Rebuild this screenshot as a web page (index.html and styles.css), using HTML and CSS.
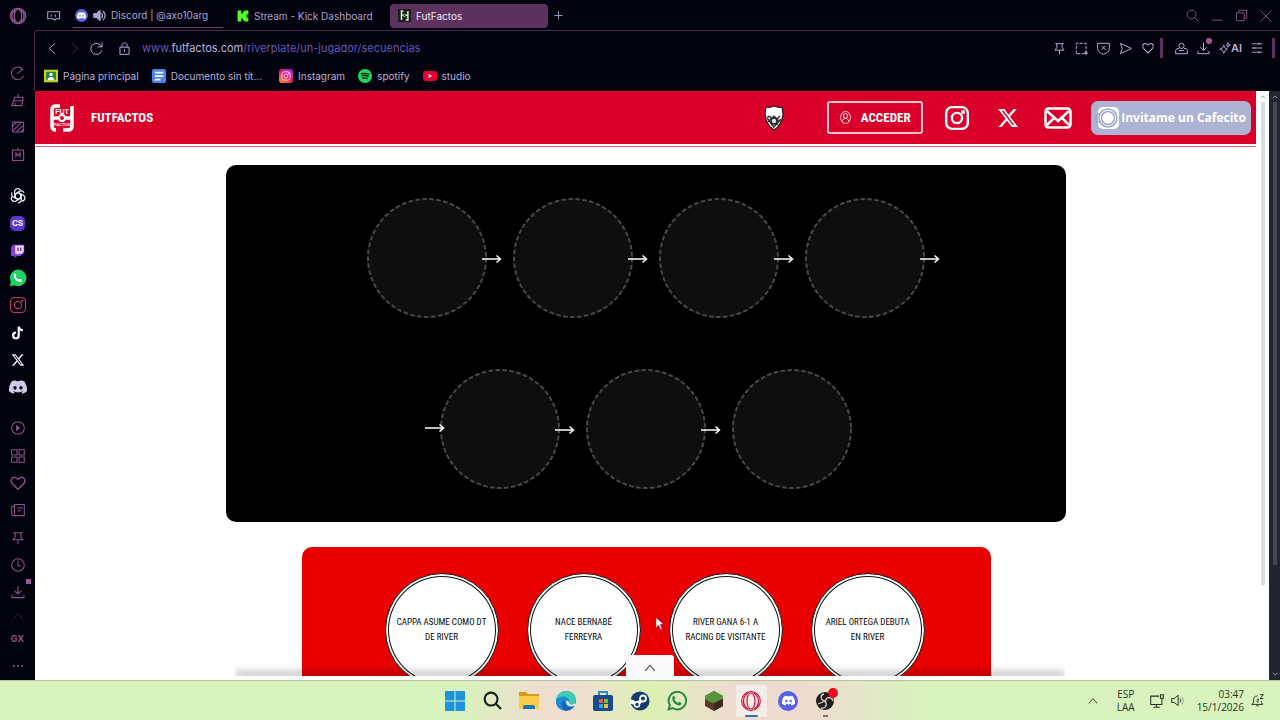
FILE: index.html
```html
<!DOCTYPE html>
<html lang="es">
<head>
<meta charset="utf-8">
<title>FutFactos</title>
<link rel="stylesheet" href="styles.css">
</head>
<body>
<svg class="defs" aria-hidden="true">
  <symbol id="opera" viewBox="0 0 20 20"><circle cx="10" cy="10" r="8.5"/><ellipse cx="10" cy="10" rx="4.2" ry="7.6"/><path d="M7 3.5c-5 3-5 10 0 13M13 3.5c5 3 5 10 0 13"/></symbol>
  <symbol id="discord" viewBox="0 0 24 24"><path stroke="none" fill="currentColor" fill-rule="evenodd" d="M20.3 4.4A19.8 19.8 0 0 0 15.4 3l-.6 1.2a18 18 0 0 0-5.6 0L8.600 3a19.700 19.700 0 0 0-4.900 1.400C.5 9-.3 13.600.1 18.100a20 20 0 0 0 6 3l1.300-2-2-1 .5-.4a14 14 0 0 0 12.200 0l.5.4-2 1 1.300 2a20 20 0 0 0 6-3c.5-5.200-.8-9.700-3.600-13.700zM8 15.300c-1.200 0-2.200-1-2.200-2.400 0-1.300 1-2.400 2.200-2.400s2.200 1.100 2.200 2.400-1 2.400-2.200 2.400zm8 0c-1.200 0-2.200-1-2.200-2.400 0-1.300 1-2.400 2.200-2.400s2.200 1.100 2.200 2.400-1 2.400-2.200 2.400z"/></symbol>
  <symbol id="instagram" viewBox="0 0 24 24"><rect x="2" y="2" width="20" height="20" rx="5.500"/><circle cx="12" cy="12" r="4.700"/><circle cx="17.600" cy="6.400" r=".8" fill="currentColor"/></symbol>
  <symbol id="x" viewBox="0 0 24 24"><path stroke="none" fill="currentColor" fill-rule="evenodd" d="M18.200 2.250h3.300l-7.200 8.260 8.500 11.240h-6.660l-5.200-6.800-6 6.800H1.700l7.700-8.840L1.250 2.250H8l4.700 6.230zM17 19.770h1.900L7.100 4.130H5.100z"/></symbol>
  <symbol id="whatsapp" viewBox="0 0 24 24"><path stroke="none" fill="currentColor" d="M7 6.500c.8-.8 1.700-.7 2 .2l.9 2-1 1.400c1 2 2.300 3.300 4.300 4.200l1.300-1.400 2.400 1.100c.8.500.3 2.200-.9 2.900-1.500.9-3.800.2-5.900-1.200C7.800 14 5 9.200 7 6.500z"/></symbol>
  <symbol id="heart" viewBox="0 0 20 20"><path d="M10 17 3.500 10.500C.5 7 4 2 8 4.200l2 1.700 2-1.700c4-2.200 7.500 2.800 4.500 6.300z"/></symbol>
  <symbol id="pin" viewBox="0 0 20 20"><path d="M4 2.500h12l-2 2v4l3 4H3l3-4v-4zM10 12.500V19"/></symbol>
  <symbol id="download" viewBox="0 0 20 20"><path d="M10 1v12M5 8l5 5 5-5M1.500 14v4h17v-4"/></symbol>
  <symbol id="search" viewBox="0 0 20 20"><circle cx="8.500" cy="8.500" r="6.800"/><path d="m13.500 13.500 5.500 5.500"/></symbol>
  <symbol id="up" viewBox="0 0 20 20"><path d="m3 14 7-8 7 8"/></symbol>
  <symbol id="arrow" viewBox="0 0 20 10"><path d="M0 5h18M14.500 1.500 18.500 5l-4 3.500"/></symbol>
  <symbol id="ring" viewBox="0 0 120 120"><circle cx="60" cy="60" r="59" stroke-width="2" stroke-dasharray="4.500 2.500"/></symbol>
  <symbol id="fj" viewBox="0 0 24 28"><path d="M9 2H4v24M15 26h6V2M4 13h4M16 13h5" fill="none" stroke="currentColor" stroke-width="4"/><circle cx="12" cy="14" r="3" fill="none" stroke="currentColor" stroke-width="2"/></symbol>
</svg>

<div class="desktop">
  <div class="browser">
    <nav class="sidebar" aria-label="Barra lateral">
      <button class="brand" aria-label="Opera"><svg class="i18"><use href="#opera"/></svg></button>
      <button aria-label="Velocidad"><svg viewBox="0 0 20 20"><path d="M17.500 6A9 9 0 1 0 18 14M9 11l8-7"/></svg></button>
      <button aria-label="Limpieza"><svg viewBox="0 0 20 20"><path d="M10 1v5M5 6h12v5H4zM4 11l-3 7h14l2-7M6 14v4M18 18h1"/></svg></button>
      <button aria-label="Fondo"><svg viewBox="0 0 20 20"><rect x="2" y="3" width="16" height="14" rx="1"/><path d="m2 9 6-6M2 16 15 3M8 17 18 7M14 17l4-4"/></svg></button>
      <button aria-label="Mods"><svg viewBox="0 0 20 20"><rect x="2" y="3" width="16" height="15"/><path d="M10 0v3M7 14V7l3 4 3-4v7"/></svg></button>
      <span class="half"></span>
      <button class="white" aria-label="ChatGPT"><svg class="i18" viewBox="0 0 24 24"><g id="petal"><path d="M7.500 14.500V6.500a4.300 4.300 0 0 1 8-2.200M7.500 9.500l6.500-3.800a4.300 4.300 0 0 1 6 2"/></g><use href="#petal" transform="rotate(120 12 12)"/><use href="#petal" transform="rotate(240 12 12)"/><path d="m12 7.800 3.600 2.100v4.200L12 16.200l-3.600-2.100V9.900z"/></svg></button>
      <button aria-label="CS"><span class="cs">CS</span></button>
      <button aria-label="Twitch"><svg viewBox="0 0 20 20"><path d="M3 1h16v12l-5 4H9l-4 3v-3H0V5z" fill="#7d42dc" stroke="none"/><path d="M6 2h12v9l-3 3h-4l-2 2v-2H6z" fill="#f1ddff" stroke="none"/><path d="M10 5v5M14 5v5" stroke="#6427bf" stroke-width="2"/></svg></button>
      <button class="white" aria-label="WhatsApp"><svg class="i18" viewBox="0 0 24 24"><path d="M1 23l1.500-6A11 11 0 1 1 7 21.500z" fill="#20d365" stroke="none"/><use href="#whatsapp"/></svg></button>
      <button aria-label="Instagram"><svg class="i18 ig-dark"><use href="#instagram"/></svg></button>
      <button class="white" aria-label="TikTok"><svg viewBox="0 0 20 20"><path d="M11 1v12.500a4 4 0 1 1-4-4M11 1c.5 3.500 3 5 6 5.200" stroke-width="3.200"/></svg></button>
      <button class="white" aria-label="X"><svg><use href="#x"/></svg></button>
      <button class="lilac" aria-label="Discord"><svg class="i18"><use href="#discord"/></svg></button>
      <span class="half"></span>
      <button aria-label="Reproductor"><svg viewBox="0 0 20 20"><circle cx="10" cy="10" r="9"/><path d="m8 7 4 3-4 3z" fill="currentColor"/></svg></button>
      <button aria-label="Espacios"><svg viewBox="0 0 20 20"><path d="M1 1h7.500v7.500H1zM11.500 1H19v7.500h-7.500zM1 11.500h7.500V19H1zM11.500 11.500H19V19h-7.500z"/></svg></button>
      <button aria-label="Favoritos"><svg class="i18"><use href="#heart"/></svg></button>
      <button aria-label="Noticias"><svg viewBox="0 0 20 20"><path d="M5 2h14v16H4c-2 0-3-1-3-3V5h4zM5 2v14M9 7h8M9 11h5"/></svg></button>
      <button aria-label="Fijados"><svg><use href="#pin"/></svg></button>
      <button aria-label="Historial"><svg viewBox="0 0 20 20"><circle cx="10" cy="10" r="9"/><path d="M10 4v7h4"/></svg></button>
      <button class="badge-host" aria-label="Descargas"><svg><use href="#download"/></svg><span class="badge"></span></button>
      <span class="faint"><svg><use href="#up"/></svg></span>
      <button class="gx">GX</button>
      <button aria-label="Más"><svg viewBox="0 0 20 20"><path d="M4 10h.1M10 10h.1M16 10h.1" stroke-width="3" stroke-linecap="round"/></svg></button>
    </nav>

    <div class="main">
      <header class="tabs">
        <button class="island" aria-label="Isla de pestañas"><svg viewBox="0 0 20 20"><path d="M1 4h17v10h-5l-2 2-2-2H1zM6 8v3M12 8v3"/></svg></button>
        <button class="tab playing"><span class="disc"><svg><use href="#discord"/></svg></span><svg class="i13" viewBox="0 0 20 20"><path d="M1 7h4l6-5v16l-6-5H1z" fill="currentColor"/><path d="M13 6c2 2 2 6 0 8M15 3c5 4 5 10 0 14" stroke-width="2"/></svg>Discord | @axo10arg</button>
        <button class="tab"><svg class="i12" viewBox="0 0 20 20"><path d="M1 1h6v5h3V3h2V1h7v6h-2v2h-2v2h2v2h2v6h-7v-2h-2v-3H7v5H1z" fill="#4dfc2b" stroke="none"/></svg>Stream - Kick Dashboard</button>
        <button class="tab active"><span class="fav"><svg><use href="#fj"/></svg></span>FutFactos</button>
        <button class="plus" aria-label="Nueva pestaña"><svg viewBox="0 0 20 20"><path d="M10 1v18M1 10h18"/></svg></button>
        <div class="window-buttons">
          <button aria-label="Buscar"><svg class="i13"><use href="#search"/></svg></button>
          <button aria-label="Minimizar"><svg class="i12" viewBox="0 0 20 20"><path d="M1 17h18"/></svg></button>
          <button aria-label="Restaurar"><svg class="i13" viewBox="0 0 20 20"><path d="M2 6h12v12H2zM6 6V2h12v12h-4"/></svg></button>
          <button aria-label="Cerrar"><svg class="i12" viewBox="0 0 20 20"><path d="m1 1 18 18M19 1 1 19"/></svg></button>
        </div>
      </header>
      <div class="chrome">
        <div class="toolbar">
          <button aria-label="Atrás"><svg class="i13" viewBox="0 0 20 20"><path d="m14 2-9 8 9 8"/></svg></button>
          <button class="dim" aria-label="Adelante"><svg class="i13" viewBox="0 0 20 20"><path d="m6 2 9 8-9 8"/></svg></button>
          <button aria-label="Recargar"><svg class="i13" viewBox="0 0 20 20"><path d="M17.500 7A8.500 8.500 0 1 0 18 13M18.500 1v6.500H12"/></svg></button>
          <button class="lock" aria-label="Sitio seguro"><svg class="i13" viewBox="0 0 20 20"><path d="M3 8h14v11H3zM6 8V5c0-5 8-5 8 0v3M10 11v4"/></svg></button>
          <div class="url">www.<b>futfactos.com</b>/riverplate/un-jugador/secuencias</div>
          <div class="tools">
            <button aria-label="Fijar"><svg class="i13"><use href="#pin"/></svg></button>
            <button aria-label="Captura"><svg class="i13" viewBox="0 0 20 20"><path d="M2 18V2h15v16z" stroke-dasharray="5 2"/><path d="M14 17h6M17 14v6"/></svg></button>
            <button aria-label="Bloqueador"><svg class="i13" viewBox="0 0 20 20"><path d="M1 2h18v8c0 5-4 7-9 9-5-2-9-4-9-9zM7 6l6 6M13 6l-6 6"/></svg></button>
            <button aria-label="Enviar"><svg class="i13" viewBox="0 0 20 20"><path d="m2 2 17 8-17 8 3-8z"/></svg></button>
            <button aria-label="Me gusta"><svg class="i14"><use href="#heart"/></svg></button>
            <span class="divider"></span>
            <button class="user" aria-label="Perfil"><svg class="i13" viewBox="0 0 20 20"><circle cx="10" cy="6" r="4"/><path d="M6 10H3l-2 3v5h18v-5l-2-3h-3M6 13h8"/></svg></button>
            <button class="badge-host" aria-label="Descargas"><svg class="i13"><use href="#download"/></svg><span class="badge round"></span></button>
            <button class="ai"><svg class="i12" viewBox="0 0 20 20"><path d="m8 5 2 5 4 2-4 2-2 5-2-5-5-2 5-2zM15 1l1 3 3 1-3 1-1 3-1-3-2-1 2-1z"/></svg>AI</button>
            <button aria-label="Ajustes"><svg class="i12" viewBox="0 0 20 20"><path d="M1 3h18M1 10h18M1 17h18M13 1v4M6 8v4M13 15v4"/></svg></button>
            <span class="divider last"></span>
          </div>
        </div>
        <nav class="bookmarks" aria-label="Marcadores">
          <a href="#"><svg class="i14" viewBox="0 0 20 20"><path d="M0 1h20v18H0z" fill="#c3d51b" stroke="none"/><path d="M3 4h14v12H3z" fill="#288343" stroke="none"/><circle cx="10" cy="8" r="2.500" fill="#fff" stroke="none"/><path d="M5 16c0-6 10-6 10 0z" fill="#fff" stroke="none"/></svg>Página principal</a>
          <a href="#"><svg class="i14" viewBox="0 0 20 20"><rect width="20" height="20" rx="3" fill="#4c86e8" stroke="none"/><path d="M4 5h12M4 10h12M4 15h8" stroke="#fff" stroke-width="2.500"/></svg>Documento sin tít...</a>
          <a href="#"><span class="ig-fav"><svg><use href="#instagram"/></svg></span>Instagram</a>
          <a href="#"><svg class="i14" viewBox="0 0 20 20"><circle cx="10" cy="10" r="10" fill="#1ed760" stroke="none"/><path d="M4 7q6-2 12 1M5 10q5-2 10 1M6 13q4-1 8 1" stroke="#07120b" stroke-width="1.800"/></svg>spotify</a>
          <a href="#"><svg class="i14" viewBox="0 0 20 20"><rect y="3" width="20" height="14" rx="4" fill="#e80035" stroke="none"/><path d="m8 7 5 3-5 3z" fill="#fff" stroke="none"/></svg>studio</a>
        </nav>
      </div>

      <div class="viewport">
        <div class="page">
          <header class="site-header">
            <a class="logo" href="#"><svg class="logo-mark" viewBox="0 0 24 28"><path d="M10 2H6Q2 2 2 6v16q0 4 4 4M13 26h5q4 0 4-4V2M2 14h6M16 14h6" stroke-width="3.500"/><circle cx="12" cy="14" r="3" stroke-width="2"/><text x="12" y="10" text-anchor="middle">FUT</text><text class="tiny" x="12" y="22" text-anchor="middle">FACTOS</text></svg><span>FUTFACTOS</span></a>
            <a class="crest" href="#" aria-label="River Plate"><svg viewBox="0 0 20 26"><path d="M2 2q4 1 8-1 4 2 8 1l1 7q-1 11-9 16Q2 20 1 9z" fill="#fff" stroke="#24151b" stroke-width="1.200"/><path d="m3 13 2-2M4 17l6-6M7 20l9-9M9 23l8-9M5 11l9 9M10 11l6 6M3 13l7 9" stroke="#333"/><circle cx="10" cy="16" r="3" fill="#ddd" stroke="#222"/></svg></a>
            <a class="login" href="#"><svg viewBox="0 0 20 24"><ellipse cx="10" cy="12" rx="9" ry="11"/><circle cx="10" cy="9" r="4"/><path d="M4 19c1-7 11-7 12 0"/></svg>ACCEDER</a>
            <a class="social" href="#" aria-label="Instagram"><svg class="i26 ig"><use href="#instagram"/></svg></a>
            <a class="social" href="#" aria-label="X"><svg class="i22"><use href="#x"/></svg></a>
            <a class="social mail" href="#" aria-label="Correo"><svg viewBox="0 0 28 22"><rect x="1.500" y="1.500" width="25" height="19" rx="3"/><path d="m3 4 11 10L25 4M3 18l7-7M25 18l-7-7"/></svg></a>
            <a class="cafe" href="#"><svg viewBox="0 0 24 24"><rect x="3" y="1" width="21" height="22" rx="5" fill="#fff" stroke="none"/><circle cx="13" cy="12" r="6.500"/><circle cx="13" cy="12" r="9"/><path d="M5 8c-6-1-6 8 0 8"/></svg>Invitame un Cafecito</a>
          </header>
          <main class="content">
            <section class="board" aria-label="Secuencia">
              <div class="row">
                <div class="slot"><svg class="ring"><use href="#ring"/></svg><svg class="arrow"><use href="#arrow"/></svg></div>
                <div class="slot"><svg class="ring"><use href="#ring"/></svg><svg class="arrow"><use href="#arrow"/></svg></div>
                <div class="slot"><svg class="ring"><use href="#ring"/></svg><svg class="arrow"><use href="#arrow"/></svg></div>
                <div class="slot"><svg class="ring"><use href="#ring"/></svg><svg class="arrow"><use href="#arrow"/></svg></div>
              </div>
              <div class="row">
                <div class="slot"><svg class="ring"><use href="#ring"/></svg><svg class="arrow before"><use href="#arrow"/></svg><svg class="arrow"><use href="#arrow"/></svg></div>
                <div class="slot"><svg class="ring"><use href="#ring"/></svg><svg class="arrow"><use href="#arrow"/></svg></div>
                <div class="slot"><svg class="ring"><use href="#ring"/></svg></div>
              </div>
            </section>
            <section class="options" aria-label="Opciones">
              <button>CAPPA ASUME COMO DT<br>DE RIVER</button>
              <button>NACE BERNABÉ<br>FERREYRA</button>
              <button>RIVER GANA 6-1 A<br>RACING DE VISITANTE</button>
              <button>ARIEL ORTEGA DEBUTA<br>EN RIVER</button>
            </section>
          </main>
        </div>
        <div class="inner-scroll"><svg><use href="#up"/></svg><span></span></div>
        <div class="drawer"><button aria-label="Mostrar"><svg class="i14"><use href="#up"/></svg></button></div>
        <div class="outer-scroll"><svg><use href="#up"/></svg><span></span><svg class="down"><use href="#up"/></svg></div>
      </div>
    </div>
  </div>

  <footer class="taskbar">
    <div class="apps">
      <button aria-label="Inicio"><svg viewBox="0 0 20 20"><path d="M0 0h9.500v9.500H0zM10.500 0H20v9.500h-9.500zM0 10.500h9.500V20H0zM10.500 10.500H20V20h-9.500z" fill="#1c93dc" stroke="none"/></svg></button>
      <button aria-label="Buscar"><svg class="thick"><use href="#search"/></svg></button>
      <button aria-label="Archivos"><svg viewBox="0 0 20 20"><path d="M0 1h7l2 2h11v15H0z" fill="#d99a1c" stroke="none"/><path d="M0 5h20v13H0z" fill="#fbcc45" stroke="none"/><path d="M4 18v-2q0-2 2-2h8q2 0 2 2v2z" fill="#1975b8" stroke="none"/></svg></button>
      <button aria-label="Edge"><svg viewBox="0 0 20 20"><circle cx="10" cy="10" r="10" fill="#1764b4" stroke="none"/><path d="M0 9C1-3 20-3 20 9c0 5-6 6-7 3 1-4-7-8-13-3z" fill="#3bcbb6" stroke="none"/><path d="M0 9C6 2 15 7 13 11c-1 3 3 5 6 3-5 5-11 1-10-4C5 9 4 15 8 19-1 18 0 9 0 9z" fill="#168ed8" stroke="none"/><path d="M10 10c2-1 3 1 3 2 1 2 4 2 6 0l1 2c-5 3-10 1-10-4z" fill="#eff2e8" stroke="none"/></svg></button>
      <button aria-label="Tienda"><svg viewBox="0 0 20 20"><path d="M6 5V1h8v4" stroke="#2b8dc7" stroke-width="2"/><rect y="4" width="20" height="16" rx="2" fill="#174b89" stroke="none"/><path d="M6 8h4v4H6z" fill="#ed5540" stroke="none"/><path d="M11 8h4v4h-4z" fill="#7dbb44" stroke="none"/><path d="M6 13h4v4H6z" fill="#29a6e6" stroke="none"/><path d="M11 13h4v4h-4z" fill="#f7bd2c" stroke="none"/></svg></button>
      <button aria-label="Steam"><svg viewBox="0 0 20 20"><circle cx="10" cy="10" r="9.500" fill="#123c70" stroke="none"/><path d="M0 10l7 3 5-4" stroke="#fff" stroke-width="4"/><circle cx="7" cy="13.500" r="2.500" fill="#123c70" stroke="#fff" stroke-width="1.500"/><circle cx="13" cy="7.500" r="3" fill="#123c70" stroke="#fff" stroke-width="1.800"/></svg></button>
      <button class="green" aria-label="WhatsApp"><svg viewBox="0 0 24 24"><path d="M2 22l1.500-5A10.500 10.500 0 1 1 7 20.500z" stroke-width="2.300"/><use href="#whatsapp"/></svg></button>
      <button aria-label="Minecraft"><svg viewBox="0 0 20 20"><path d="m10 0 9 5v10l-9 5-9-5V5z" fill="#593b2a" stroke="none"/><path d="m10 10 9-5v10l-9 5z" fill="#3b281e" stroke="none"/><path d="m10 0 9 5v3l-3 1-2 1-4 2-4-1-5-3V5z" fill="#579638" stroke="none"/></svg></button>
      <button class="running red" aria-label="Opera GX"><svg viewBox="0 0 20 20"><circle cx="10" cy="10" r="9.300"/><ellipse cx="10" cy="10" rx="4" ry="8"/><path d="M7 2C1 6 1 14 7 18M13 2c6 4 6 12 0 16"/></svg></button>
      <button aria-label="Discord"><span class="disc big"><svg><use href="#discord"/></svg></span></button>
      <button class="badge-host obs" aria-label="OBS"><svg viewBox="0 0 20 20"><circle cx="10" cy="10" r="9" fill="#231e20" stroke="none"/><g stroke="#d4cacb" stroke-width="1.300"><path d="M10 10C5 9 5 4 9 3M10 10c2-5 7-4 8 0M10 10c3 4 0 8-4 7M10 10l-7 3"/></g></svg><span class="badge rec"></span></button>
    </div>
    <div class="tray">
      <button class="chev" aria-label="Iconos ocultos"><svg class="i12"><use href="#up"/></svg></button>
      <div class="lang">ESP<br>LAA</div>
      <button aria-label="Red"><svg class="i14" viewBox="0 0 20 20"><path d="M13 3H1v12h16V9M9 15v4M5 19h9M15 1h4v5h-4zM17 6v4"/></svg></button>
      <button aria-label="Volumen"><svg class="i13" viewBox="0 0 20 20"><path d="M1 7h4l6-5v16l-6-5H1zM14 7q2 3 0 6"/><path d="M17 4q4 6 0 12" opacity=".4"/></svg></button>
      <div class="clock">03:47<br>15/1/2026</div>
      <button aria-label="Notificaciones"><svg class="i13" viewBox="0 0 20 20"><path d="M10 3C5 3 4 6 4 9v4l-3 3h17l-2-3v-2M8 17q2 3 4 0M9 8h3l-3 4h3M14 1h5l-5 6h5"/></svg></button>
    </div>
  </footer>
</div>
<svg class="cursor" viewBox="0 0 10 16" aria-hidden="true"><path d="M1 1v12l3-3 2 5 2-1-2-5h4z"/></svg>
</body>
</html>
```
FILE: styles.css
```css
* { box-sizing: border-box; }
body { margin: 0; background: #03020f; font-family: Inter, "Liberation Sans", sans-serif; font-size: 10px; line-height: 16px; }
button { border: 0; padding: 0; background: none; color: inherit; font: inherit; display: flex; align-items: center; justify-content: center; }
a { color: inherit; text-decoration: none; }
svg { display: block; width: 16px; height: 16px; flex: none; fill: none; stroke: currentColor; stroke-width: 1.5; }
.defs { position: absolute; width: 0; height: 0; }
.i12 { width: 12px; height: 12px; }
.i13 { width: 13px; height: 13px; }
.i14 { width: 14px; height: 14px; }
.i18 { width: 18px; height: 18px; }
.i22 { width: 22px; height: 22px; }
.i26 { width: 26px; height: 26px; }

.desktop { height: 100vh; display: flex; flex-direction: column; overflow: hidden; }
.browser { flex: 1; min-height: 0; display: flex; }
.main { flex: 1; min-width: 0; display: flex; flex-direction: column; }

.sidebar { width: 35px; display: flex; flex-direction: column; color: #8c5588; }
.sidebar > button { flex: 1 1 0; min-height: 0; }
.sidebar > .brand { flex: none; height: 32px; margin-bottom: 27px; }
.sidebar svg:not(.i18) { width: 14px; height: 14px; }
.half { flex: .5 1 0; }
.faint { flex: .7 1 0; min-height: 0; display: flex; align-items: center; justify-content: center; opacity: .3; }
.sidebar .white { color: #f2f4f7; }
.sidebar .lilac { color: #cfc9e6; }
.sidebar .ig-dark { color: #c23d64; stroke-width: 1.5; }
.cs { width: 15px; height: 15px; border-radius: 5px; background: #5d35cf; color: #fff; font-size: 8px; font-weight: 700; line-height: 15px; }
.gx { font-size: 9px; font-weight: 700; }
.badge-host { position: relative; }
.badge { position: absolute; top: 0; right: 4px; width: 5px; height: 5px; background: #a15695; }
.badge.round { top: -4px; right: -2px; width: 6px; height: 6px; border-radius: 50%; }

.tabs { height: 30px; display: flex; align-items: center; padding: 1px 8px 0 11px; color: #a9a4cf; }
.tabs .tab { height: 24px; gap: 5px; justify-content: flex-start; white-space: nowrap; }
.island { width: 15px; margin-right: 12px; }
.island svg { width: 14px; height: 14px; }
.tabs .playing { width: 150px; padding-left: 2px; margin-right: 14px; border-bottom: 1px solid #6c3c6d; }
.tab:nth-child(3) { width: 153px; }
.tabs .active { width: 158px; padding-left: 8px; border-radius: 4px; background: #5c315e; color: #f0e6f3; }
.disc { width: 13px; height: 13px; display: flex; align-items: center; justify-content: center; border-radius: 50%; background: #5561e2; color: #fff; }
.disc svg { width: 9px; height: 9px; }
.disc.big { width: 20px; height: 20px; }
.fav { padding: 1px 2px; background: #17201a; color: #dcedd2; }
.fav svg { width: 9px; height: 11px; }
.plus { width: 21px; }
.plus svg { width: 9px; height: 9px; stroke-width: 2; }
.window-buttons { margin-left: auto; display: flex; gap: 12px; color: #85567f; }

.chrome { border-top: 1px solid #4a2b50; border-left: 1px solid #4a2b50; border-radius: 4px 0 0; margin-left: -1px; padding-bottom: 4px; color: #b6afd4; }
.toolbar { height: 34px; display: flex; align-items: center; gap: 9px; padding: 0 5px 0 11px; }
.toolbar .dim { opacity: .3; }
.toolbar .lock { margin-left: 6px; }
.url { margin-left: 2px; color: #6159b6; font-size: 11px; }
.url b { font-weight: 400; color: #bbb4da; }
.tools { margin-left: auto; display: flex; align-items: center; gap: 9px; }
.divider { width: 3px; height: 20px; margin-left: -4px; background: #56315c; }
.user { margin-left: 3px; }
.last { margin-left: 0; }
.ai { font-size: 11px; font-weight: 600; }
.bookmarks { height: 22px; display: flex; align-items: center; gap: 13px; padding-left: 9px; white-space: nowrap; }
.bookmarks a { display: flex; align-items: center; gap: 5px; }
.bookmarks a:nth-child(3) { margin-left: 4px; }
.ig-fav { padding: 2px; border-radius: 3px; background: linear-gradient(35deg, #ffa01d, #ec1676 50%, #942cd8); color: #fff; }
.ig-fav svg { width: 10px; height: 10px; stroke-width: 2; }

.viewport { position: relative; flex: 1; min-height: 0; display: flex; background: #fff; padding-bottom: 4px; }
.page { flex: 1; overflow: hidden; font-family: "Roboto Condensed", "Liberation Sans Narrow", "Liberation Sans", sans-serif; }
.site-header { display: flex; align-items: center; height: 53px; padding: 0 5px 0 15px; background: #d90029; color: #fff; outline: 1px solid #e06078; outline-offset: 2px; }
.logo { display: flex; align-items: center; gap: 17px; margin-right: auto; font-size: 13px; font-weight: 700; }
.logo-mark { width: 24px; height: 28px; }
.logo-mark text { fill: #fff; stroke: none; font: 700 7px "Liberation Sans", sans-serif; }
.logo-mark .tiny { font-size: 4px; }
.crest svg { width: 20px; height: 26px; }
.login { width: 96px; height: 33px; margin: 0 21px 0 43px; display: flex; align-items: center; justify-content: center; gap: 10px; border: 2px solid #ffc4d0; border-radius: 3px; font-size: 13px; font-weight: 700; }
.login svg { width: 11px; height: 15px; }
.ig { stroke-width: 2.2; }
.social { margin-right: 27px; }
.social.mail { margin: 0 19px 0 -2px; }
.mail svg { width: 28px; height: 22px; stroke-width: 2.5; }
.cafe { height: 34px; display: flex; align-items: center; gap: 2px; padding: 0 5px 0 4px; border-radius: 7px; background: #adb4d3; font: 700 12px "Open Sans", sans-serif; white-space: nowrap; }
.cafe svg { width: 24px; height: 24px; color: #9ca6ca; }

.content { display: flex; flex-direction: column; align-items: center; gap: 25px; padding: 21px 0 21px 1px; }
.board { width: 90%; max-width: 840px; display: flex; flex-direction: column; gap: 51px; padding: 33px 0; border-radius: 10px; background: #000; }
.row { display: flex; justify-content: center; gap: 26px; }
.slot { position: relative; width: 120px; height: 120px; border-radius: 50%; background: #0e0e0e; }
.ring { width: 100%; height: 100%; color: #484848; }
.arrow { position: absolute; right: -15px; top: 56px; width: 20px; height: 10px; color: #fff; }
.arrow.before { right: auto; left: -15px; top: 54px; }
.options { display: flex; gap: 28px; padding: 26px 66px 26px 83px; border-radius: 10px; background: #e90000; }
.options button { width: 114px; height: 114px; border: 1px solid #241012; border-radius: 50%; background: #fff; box-shadow: inset 0 0 0 2px #fff, inset 0 0 0 3px #111; color: #080808; font-size: 9px; line-height: 15px; text-align: center; white-space: nowrap; }

.inner-scroll, .outer-scroll { display: flex; flex-direction: column; align-items: center; gap: 2px; padding-top: 3px; }
.inner-scroll { width: 13px; color: #9a9a9a; }
.inner-scroll svg, .outer-scroll svg { width: 6px; height: 6px; stroke-width: 3; }
.inner-scroll span { width: 4px; height: 83%; background: #d6dde2; }
.outer-scroll { width: 11px; margin-bottom: -4px; background: #232431; color: #a2a2b4; }
.outer-scroll span { width: 4px; height: 79%; background: #454755; }
.outer-scroll .down { margin: auto 0 3px; transform: rotate(180deg); }
.drawer { position: absolute; bottom: 0; left: 200px; right: 215px; height: 4px; display: flex; align-items: flex-end; justify-content: center; background: #fff; box-shadow: 0 -3px 10px #0007; clip-path: inset(-30px 0 0 0); }
.drawer button { width: 48px; height: 25px; border-radius: 3px 3px 0 0; background: #fafafa; color: #444; flex: none; }

.taskbar { height: 40px; display: grid; grid-template-columns: 1fr auto 1fr; align-items: center; border-top: 1px solid #b4c49f; background: linear-gradient(90deg, #d8f3bd 0 36%, #eeded0 42% 45%, #dcf1b4 51%, #eedbd0 57% 63%, #d8f3bd 72%); color: #26321f; }
.apps { grid-column: 2; display: flex; }
.apps button { width: 37px; height: 38px; }
.apps svg { width: 20px; height: 20px; }
.apps .disc svg { width: 13px; height: 13px; }
.apps .thick { width: 19px; height: 19px; color: #152117; stroke-width: 2.2; }
.green { color: #228744; }
.red { color: #ce153f; }
.apps .running { position: relative; width: 31px; height: 32px; margin: 3px; background: #f8ece9; }
.running svg { stroke-width: 1.2; }
.running::after { content: ""; position: absolute; left: 9px; bottom: 0; width: 13px; height: 2px; border-radius: 1px; background: #2675b9; }
.badge.rec { top: 6px; right: 6px; width: 10px; height: 10px; border-radius: 50%; background: #ed0619; }
.obs::after { content: ""; position: absolute; left: 16px; bottom: 3px; width: 5px; height: 2px; background: #737568; }
.tray { display: flex; align-items: center; justify-content: flex-end; gap: 7px; padding-right: 16px; font: 10px/13px "Open Sans", sans-serif; }
.chev { margin-right: 11px; }
.lang { margin-right: 8px; text-align: center; }
.clock { margin-left: 6px; text-align: right; }
.cursor { position: absolute; left: 655px; top: 616px; width: 9px; height: 15px; color: #92002a; fill: #fff; stroke-width: .7; }
```
